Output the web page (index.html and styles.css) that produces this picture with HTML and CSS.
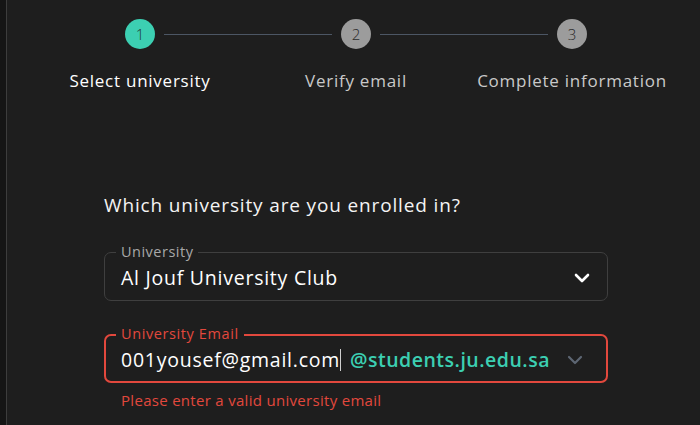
FILE: index.html
```html
<!DOCTYPE html>
<html>
<head>
<meta charset="utf-8">
<link rel="stylesheet" href="styles.css">
</head>
<body>
<div class="frame">
  <div class="edge"></div>
  <main class="content">
    <div class="stepper">
      <div class="dot active">1</div>
      <div class="line"></div>
      <div class="dot">2</div>
      <div class="line"></div>
      <div class="dot">3</div>
    </div>
    <div class="labels">
      <div class="label current">Select university</div>
      <div class="label">Verify email</div>
      <div class="label">Complete information</div>
    </div>
    <form class="form">
      <h2 class="question">Which university are you enrolled in?</h2>
      <div class="field">
        <span class="legend">University</span>
        <div class="value">Al Jouf University Club</div>
        <svg class="chev" width="16" height="10" viewBox="0 0 16 10"><path d="M2 2 L8 8 L14 2" fill="none" stroke="#ffffff" stroke-width="2.6" stroke-linecap="round" stroke-linejoin="round"/></svg>
      </div>
      <div class="field error">
        <span class="legend">University Email</span>
        <div class="value">001yousef@gmail.com<span class="caret"></span></div>
        <span class="domain">@students.ju.edu.sa</span>
        <svg class="chev dim" width="16" height="10" viewBox="0 0 16 10"><path d="M2 2 L8 8 L14 2" fill="none" stroke="#5d6673" stroke-width="2.2" stroke-linecap="round" stroke-linejoin="round"/></svg>
      </div>
      <p class="err">Please enter a valid university email</p>
    </form>
  </main>
</div>
</body>
</html>
```
FILE: styles.css
```css
html, body {
  margin: 0;
  padding: 0;
  background: #1e1e1e;
  font-family: "Open Sans", "DejaVu Sans", sans-serif;
  color: #f2f2f2;
}
.frame {
  display: flex;
  width: 700px;
  height: 425px;
  overflow: hidden;
}
.edge {
  width: 6px;
  background: #151515;
  border-right: 1px solid #3d3d3d;
  flex: none;
}
.content {
  flex: 1;
  padding-top: 19px;
}
.stepper {
  display: flex;
  align-items: center;
  margin-left: 118px;
  width: 462px;
}
.dot {
  width: 30px;
  height: 30px;
  border-radius: 50%;
  background: #9c9c9c;
  color: #2a2a2a;
  font-size: 15px;
  font-weight: 300;
  display: flex;
  align-items: center;
  justify-content: center;
  flex: none;
}
.dot.active {
  background: #3ccfb2;
  color: #1f3b35;
}
.line {
  width: 168px;
  height: 1px;
  background: #4c5664;
  margin: 0 9px;
}
.labels {
  display: grid;
  grid-template-columns: 216px 216px 216px;
  margin-left: 25px;
  margin-top: 20px;
}
.label {
  text-align: center;
  font-size: 17px;
  letter-spacing: 0.75px;
  color: #c9c9c9;
  line-height: 24px;
}
.label.current {
  color: #ffffff;
}
.form {
  margin: 99px 0 0 97px;
  width: 504px;
}
.question {
  margin: 0 0 34px 0;
  font-size: 19px;
  letter-spacing: 0.85px;
  font-weight: 400;
  line-height: 26px;
  color: #f4f4f4;
}
.field {
  height: 49px;
  box-sizing: border-box;
  border: 1px solid #3f3f3f;
  border-radius: 7px;
  padding: 2px 16px 0 16px;
  display: flex;
  align-items: center;
  position: relative;
}
.field + .field {
  margin-top: 33px;
}
.legend {
  position: absolute;
  top: -10px;
  left: 11px;
  background: #1e1e1e;
  font-size: 14.5px;
  letter-spacing: 0.5px;
  color: #a8a8a8;
  padding: 0 5px;
  line-height: 18px;
}
.value {
  flex: 1;
  font-size: 19.5px;
  letter-spacing: 0.75px;
  color: #ffffff;
  display: flex;
  align-items: center;
}
.chev {
  margin-right: 1px;
}
.field.error {
  border: 2px solid #e2483d;
  padding: 2px 15px 0 15px;
}
.field.error .legend {
  top: -11px;
  left: 10px;
  color: #e2483d;
  letter-spacing: 0.6px;
}
.field.error .value {
  flex: none;
}
.caret {
  display: inline-block;
  width: 1px;
  height: 22px;
  background: #cfcfcf;
  margin-left: 0;
}
.domain {
  flex: 1;
  margin-left: 9px;
  font-size: 19.5px;
  letter-spacing: 0.5px;
  font-weight: 600;
  color: #3ccfb2;
}
.chev.dim {
  margin-right: 8px;
}
.err {
  margin: 7px 0 0 17px;
  font-size: 15px;
  letter-spacing: 0.3px;
  line-height: 20px;
  color: #e2483d;
}
```
